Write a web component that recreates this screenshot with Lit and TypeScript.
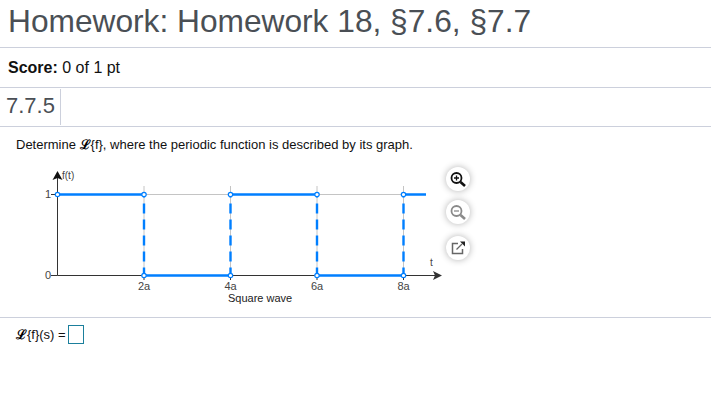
import { LitElement, html, svg, css } from 'lit';
import { customElement } from 'lit/decorators.js';

const X0 = 27.5;
const STEP = 86.5;
const Y1 = 29.5;
const Y0 = 110.5;
const TICKS = [1, 2, 3, 4].map((i) => X0 + STEP * i);

@customElement('app-root')
export class AppRoot extends LitElement {
  static styles = css`
    :host {
      display: block;
      width: 711px;
      height: 408px;
      background: #fff;
      font-family: 'Liberation Sans', Arial, sans-serif;
      overflow: hidden;
    }
    .title {
      height: 48px;
      box-sizing: border-box;
      padding: 3px 0 0 8px;
      font-size: 31.7px;
      line-height: 37px;
      color: #4a4f55;
      border-bottom: 1px solid #ccd0dc;
    }
    .score {
      height: 40px;
      box-sizing: border-box;
      padding: 11px 0 0 8px;
      font-size: 16px;
      line-height: 18px;
      color: #111;
      border-bottom: 1px solid #ccd0dc;
    }
    .score b {
      font-weight: 700;
    }
    .qnum {
      height: 39px;
      box-sizing: border-box;
      padding-top: 1px;
      border-bottom: 1px solid #ccd0dc;
      display: flex;
    }
    .qnum span {
      width: 61px;
      height: 36px;
      box-sizing: border-box;
      padding-left: 6px;
      font-size: 22px;
      line-height: 33px;
      color: #4a4f55;
      border-right: 1px solid #ccd0dc;
    }
    .prompt {
      height: 38px;
      box-sizing: border-box;
      padding: 10px 0 0 16px;
      font-size: 13px;
      line-height: 15px;
      color: #111;
    }
    .script {
      font-family: 'DejaVu Serif', 'Liberation Serif', serif;
      font-style: normal;
      font-weight: 700;
      font-size: 13px;
      color: #000;
    }
    .figure {
      height: 153px;
      box-sizing: border-box;
      padding-left: 30px;
      display: flex;
      border-bottom: 1px solid #ccd0dc;
    }
    .graph {
      width: 415px;
      height: 152px;
      display: block;
    }
    .graph text {
      font-family: 'Liberation Sans', Arial, sans-serif;
      font-size: 11px;
      fill: #444;
    }
    .graph .small {
      font-size: 10px;
    }
    .graph .caption {
      fill: #222;
    }
    .tools {
      margin: 2px 0 0 1px;
      display: flex;
      flex-direction: column;
      gap: 9px;
    }
    .tool {
      width: 24px;
      height: 24px;
      border-radius: 50%;
      background: #fff;
      box-shadow: 0 0 7px rgba(0, 0, 0, 0.3);
      display: flex;
      align-items: center;
      justify-content: center;
    }
    .tool.last {
      margin-top: 3px;
    }
    .tool svg {
      width: 18px;
      height: 18px;
      display: block;
    }
    .answer {
      padding: 7px 0 0 16px;
      display: flex;
      align-items: center;
      gap: 2px;
      font-size: 13px;
      line-height: 16px;
      color: #111;
    }
    .box {
      width: 14px;
      height: 17px;
      border: 1px solid #1b7f9c;
      background: #fff;
    }
  `;

  private graph() {
    return html`
      <svg class="graph" viewBox="0 0 415 152">
        ${svg`
          <line x1=${X0} y1=${Y1} x2="396" y2=${Y1} stroke="#c4c4c4" />
          ${TICKS.map(
            (x) => svg`<line x1=${x} y1="21" x2=${x} y2=${Y0} stroke="#c4c4c4" />
              <line x1=${x} y1=${Y0} x2=${x} y2="115" stroke="#333" />`,
          )}
          <line x1=${X0} y1=${Y0} x2="408" y2=${Y0} stroke="#333" />
          <line x1=${X0} y1="10" x2=${X0} y2=${Y0} stroke="#333" />
          <line x1="21" y1=${Y1} x2=${X0} y2=${Y1} stroke="#333" />
          <line x1="21" y1=${Y0} x2=${X0} y2=${Y0} stroke="#333" />
          <path d="M${X0} 6l-5 9 5-2 5 2z" fill="#111" />
          <path d="M412 ${Y0}l-9-4.5 2 4.5-2 4.5z" fill="#333" />
          <g stroke="#007fff" stroke-width="2.4" fill="none">
            <path d="M${X0} ${Y1}H${TICKS[0]}M${TICKS[1]} ${Y1}H${TICKS[2]}M${TICKS[3]} ${Y1}H396" />
            <path d="M${TICKS[0]} ${Y0}H${TICKS[1]}M${TICKS[2]} ${Y0}H${TICKS[3]}" />
            ${TICKS.map(
              (x) => svg`<line x1=${x} y1=${Y1} x2=${x} y2=${Y0} stroke-dasharray="10 6" stroke-dashoffset="7" />`,
            )}
          </g>
          <g fill="#fff" stroke="#007fff" stroke-width="1.2">
            <circle cx=${X0} cy=${Y1} r="2.2" />
            ${TICKS.map(
              (x) => svg`<circle cx=${x} cy=${Y1} r="2.2" /><circle cx=${x} cy=${Y0} r="2.2" />`,
            )}
          </g>
          <text class="small" x="32" y="14">f(t)</text>
          <text x="15" y="33">1</text>
          <text x="15" y="114">0</text>
          ${['2a', '4a', '6a', '8a'].map(
            (label, i) => svg`<text x=${TICKS[i]} y="125" text-anchor="middle">${label}</text>`,
          )}
          <text class="caption" x="198" y="137">Square wave</text>
          <text class="small" x="400" y="101">t</text>
        `}
      </svg>
    `;
  }

  render() {
    return html`
      <div class="title">Homework: Homework 18, §7.6, §7.7</div>
      <div class="score"><b>Score:</b> 0 of 1 pt</div>
      <div class="qnum"><span>7.7.5</span></div>
      <div class="prompt">
        Determine <span class="script">ℒ</span>{f}, where the periodic function is described by its graph.
      </div>
      <div class="figure">
        ${this.graph()}
        <div class="tools">
          <div class="tool">
            <svg viewBox="0 0 18 18" fill="none" stroke="#111" stroke-width="1.8">
              <circle cx="7.5" cy="8" r="5" />
              <path d="M11.5 12L16 16" stroke-width="2.6" />
              <path d="M5 8h5M7.5 5.5v5" stroke-width="1.3" />
            </svg>
          </div>
          <div class="tool">
            <svg viewBox="0 0 18 18" fill="none" stroke="#8a8a8a" stroke-width="1.8">
              <circle cx="7.5" cy="8" r="5" />
              <path d="M11.5 12L16 16" stroke-width="2.6" />
              <path d="M5 8h5" stroke-width="1.3" />
            </svg>
          </div>
          <div class="tool last">
            <svg viewBox="0 0 18 18" fill="none" stroke="#666" stroke-width="1.5">
              <path d="M9 4.5H3.5v10h10V10" />
              <path d="M7.5 10.5L13 5" stroke-width="1.2" />
              <path d="M11 2.5H16V7.5z" fill="#222" stroke="none" />
            </svg>
          </div>
        </div>
      </div>
      <div class="answer">
        <span><span class="script">ℒ</span>{f}(s) =</span>
        <div class="box"></div>
      </div>
    `;
  }
}
